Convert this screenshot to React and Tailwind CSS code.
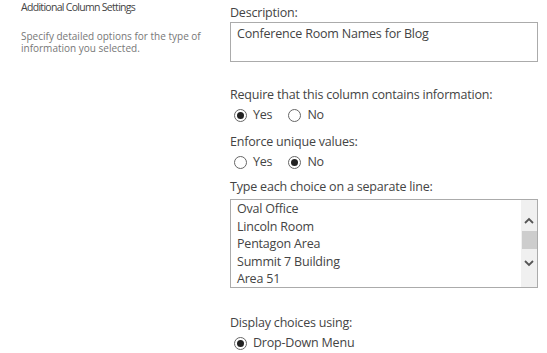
import React from 'react';

const font = { fontFamily: '"Open Sans", "Noto Sans", sans-serif' };

function Radio({ checked, label }) {
  return (
    <label className="flex items-center gap-[6px]">
      <span className="w-[13px] h-[13px] rounded-full border border-[#666] flex items-center justify-center bg-white">
        {checked && <span className="w-[7px] h-[7px] rounded-full bg-[#222]" />}
      </span>
      <span>{label}</span>
    </label>
  );
}

function Chevron({ up }) {
  return (
    <svg width="10" height="7" viewBox="0 0 10 7" className="text-[#555]">
      <path
        d={up ? 'M1 6 L5 2 L9 6' : 'M1 1 L5 5 L9 1'}
        fill="none"
        stroke="currentColor"
        strokeWidth="1.8"
      />
    </svg>
  );
}

export default function App() {
  const choices = ['Oval Office', 'Lincoln Room', 'Pentagon Area', 'Summit 7 Building', 'Area 51'];

  return (
    <div className="w-[547px] h-[353px] bg-white flex text-[#444] overflow-hidden" style={font}>
      {/* Left: section description */}
      <div className="w-[230px] pl-[21px] pr-[10px]">
        <div className="text-[10.5px] leading-[14px] tracking-[-0.7px] text-[#444]">Additional Column Settings</div>
        <div className="text-[10px] leading-[12px] mt-[16px] w-[185px] text-[#777]">
          Specify detailed options for the type of information you selected.
        </div>
      </div>

      {/* Right: column settings */}
      <div className="w-[308px] text-[12.5px] tracking-[-0.2px] leading-[18px] pt-[4px]">
        <div>Description:</div>
        <div className="h-[40px] border border-[#ababab] px-[6px] pt-[2px]">Conference Room Names for Blog</div>

        <div className="mt-[24px]">Require that this column contains information:</div>
        <div className="flex gap-[16px] pl-[4px] mt-[1px] leading-[20px]">
          <Radio checked label="Yes" />
          <Radio label="No" />
        </div>

        <div className="mt-[8px]">Enforce unique values:</div>
        <div className="flex gap-[16px] pl-[4px] mt-[1px] leading-[20px]">
          <Radio label="Yes" />
          <Radio checked label="No" />
        </div>

        <div className="mt-[6px]">Type each choice on a separate line:</div>
        <div className="mt-[3px] h-[89px] border border-[#ababab] flex">
          <div className="flex-1 px-[6px] leading-[17.5px]">
            {choices.map(c => (
              <div key={c}>{c}</div>
            ))}
          </div>
          <div className="w-[16px] bg-[#f0f0f0] flex flex-col items-center pt-[17px]">
            <Chevron up />
            <div className="w-[15px] h-[18px] bg-[#cdcdcd] mt-[7px]" />
            <div className="mt-[11px]">
              <Chevron />
            </div>
          </div>
        </div>

        <div className="mt-[26px]">Display choices using:</div>
        <div className="flex pl-[4px] mt-[1px] leading-[20px]">
          <Radio checked label="Drop-Down Menu" />
        </div>
      </div>
    </div>
  );
}
